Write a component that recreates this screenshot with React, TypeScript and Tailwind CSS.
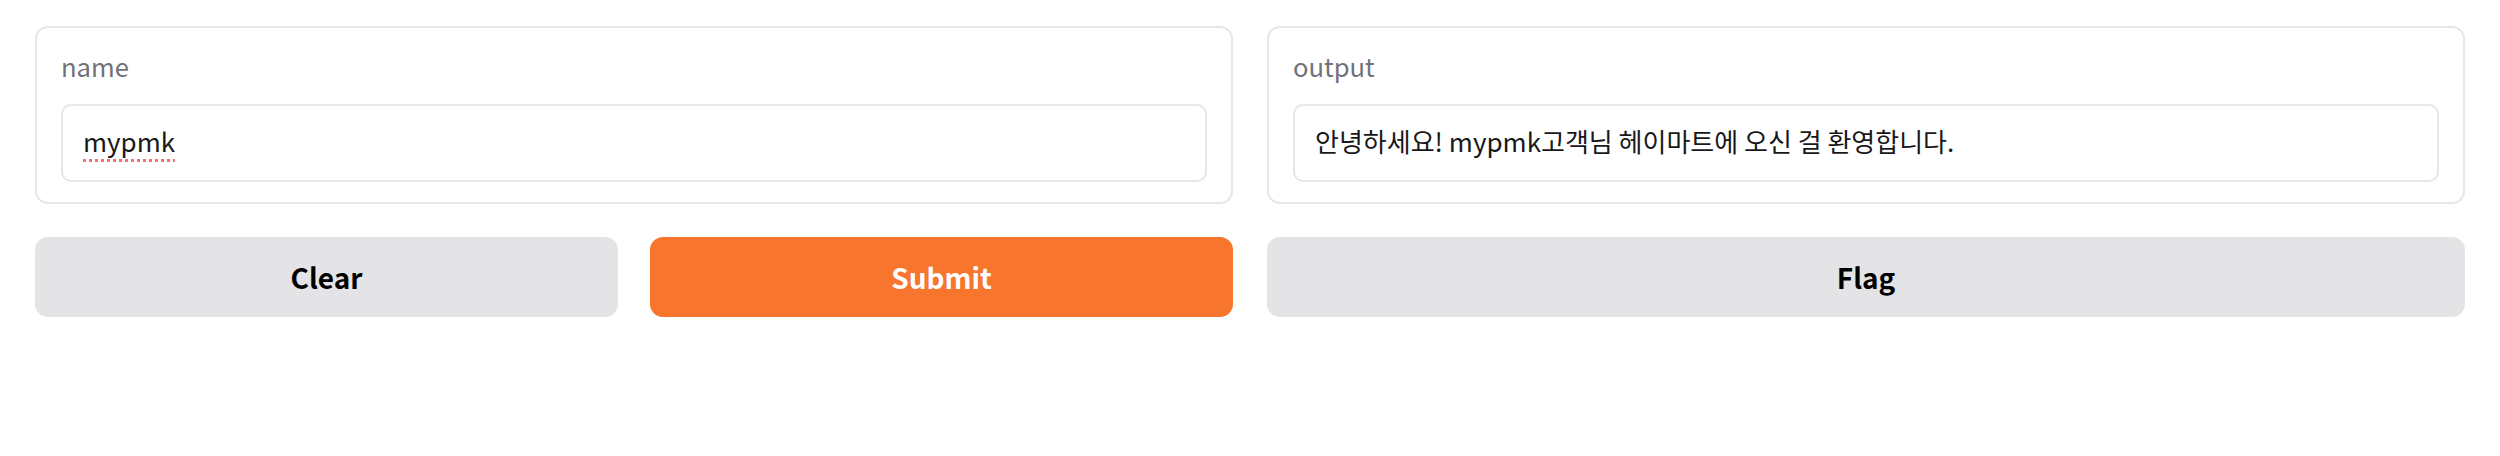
import React from "react";

// ─── Labeled text block (input / output) ──────────────────────────────────────

function Field({ label, children }: { label: string; children: React.ReactNode }) {
  return (
    <div className="flex flex-col rounded-[13px] border-2 border-[#e5e7eb] bg-white px-[24px] pt-[21px] pb-[20px]">
      <span className="text-[25.6px] leading-[33px] text-[#71717a]">{label}</span>
      <div className="mt-[22px] flex h-[78px] items-center rounded-[10px] border-2 border-[#e5e7eb] bg-white px-[20px] pb-[6px] text-[26px] text-zinc-900">
        {children}
      </div>
    </div>
  );
}

function Btn({ label, primary }: { label: string; primary?: boolean }) {
  return (
    <button
      className={[
        "flex h-[80px] flex-1 items-center justify-center rounded-[13px] text-[28px] font-semibold",
        primary ? "bg-[#f7752d] text-white" : "bg-[#e4e4e7] text-black",
      ].join(" ")}
    >
      {label}
    </button>
  );
}

export default function App() {
  return (
    <div className="min-h-[456px] bg-white px-[35px] pt-[26px] font-['Noto_Sans_CJK_KR',sans-serif]">
      <div className="grid grid-cols-2 gap-x-[34px]">
        {/* Left column: input + actions */}
        <div className="flex flex-col gap-[33px]">
          <Field label="name">
            <span className="underline decoration-dotted decoration-[#f87171] decoration-[3px] underline-offset-[7px]">
              mypmk
            </span>
          </Field>
          <div className="flex gap-[32px]">
            <Btn label="Clear" />
            <Btn label="Submit" primary />
          </div>
        </div>

        {/* Right column: output + flag */}
        <div className="flex flex-col gap-[33px]">
          <Field label="output">
            <span>안녕하세요! mypmk고객님 헤이마트에 오신 걸 환영합니다.</span>
          </Field>
          <div className="flex">
            <Btn label="Flag" />
          </div>
        </div>
      </div>
    </div>
  );
}
